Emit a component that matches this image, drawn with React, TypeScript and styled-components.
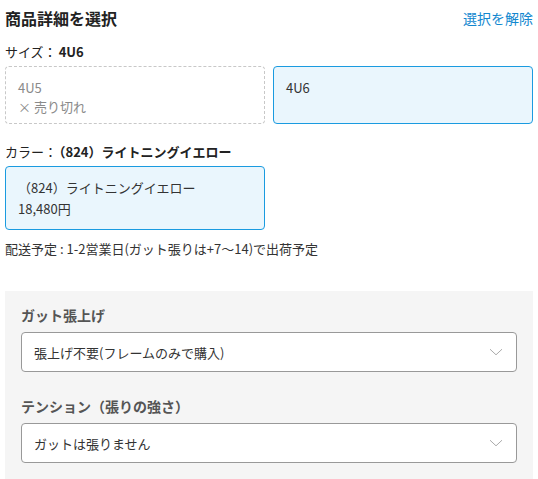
import React from "react";
import styled, { createGlobalStyle } from "styled-components";

const GlobalStyle = createGlobalStyle`
    body {
        margin: 0;
        background: #fff;
        font-family: "Noto Sans CJK JP", "Noto Sans", sans-serif;
        color: #333;
    }
`;

const Page = styled.div`
    padding: 6px 5px 0;
    height: 479px;
    overflow: hidden;
    box-sizing: border-box;
`;

const Header = styled.div`
    display: flex;
    justify-content: space-between;
    align-items: center;
    height: 24px;
`;

const Title = styled.h2`
    margin: 0;
    font-size: 16px;
    font-weight: 700;
    line-height: 24px;
    color: #222;
`;

const ClearLink = styled.a`
    font-size: 14px;
    color: #1287cf;
    text-decoration: none;
    line-height: 24px;
`;

const Label = styled.div<{ $top: number }>`
    margin-top: ${(p) => p.$top}px;
    font-size: 13px;
    line-height: 20px;
    color: #222;
    b {
        font-weight: 700;
        margin-left: 2px;
    }
`;

const CardGrid = styled.div`
    display: grid;
    grid-template-columns: 1fr 1fr;
    gap: 8px;
    margin-top: 4px;
`;

const Card = styled.div<{ $selected?: boolean; $soldOut?: boolean }>`
    box-sizing: border-box;
    min-height: 58px;
    padding: 11px 12px 7px;
    font-size: 13px;
    line-height: 19px;
    border-radius: 4px;
    border: 1px ${(p) => (p.$soldOut ? "dashed #c8c8c8" : p.$selected ? "solid #1a9be0" : "solid #ccc")};
    background: ${(p) => (p.$selected ? "#eaf6fd" : "#fff")};
    color: ${(p) => (p.$soldOut ? "#8a8a8a" : "#333")};
`;

const ColorCard = styled(Card)`
    min-height: 63px;
    padding: 10px 12px;
    line-height: 21px;
`;

const Delivery = styled.div`
    margin-top: 9px;
    font-size: 13px;
    line-height: 20px;
    color: #333;
`;

const OptionPanel = styled.div`
    margin-top: 32px;
    background: #f5f5f5;
    padding: 14px 16px 20px;
`;

const FieldLabel = styled.div<{ $top?: number }>`
    margin-top: ${(p) => p.$top ?? 0}px;
    font-size: 14px;
    font-weight: 700;
    line-height: 20px;
    color: #555;
`;

const SelectBox = styled.div`
    margin-top: 7px;
    height: 40px;
    box-sizing: border-box;
    display: flex;
    align-items: center;
    justify-content: space-between;
    padding: 0 13px 0 12px;
    background: #fff;
    border: 1px solid #999;
    border-radius: 4px;
    font-size: 13px;
    color: #333;
`;

const Chevron = () => (
    <svg width="14" height="8" viewBox="0 0 14 8" fill="none">
        <path d="M1 1.2 L7 6.8 L13 1.2" stroke="#ababab" strokeWidth="1" />
    </svg>
);

const App: React.FC = () => {
    return (
        <Page>
            <GlobalStyle />
            <Header>
                <Title>商品詳細を選択</Title>
                <ClearLink href="#">選択を解除</ClearLink>
            </Header>

            <Label $top={12}>
                サイズ：<b>4U6</b>
            </Label>
            <CardGrid>
                <Card $soldOut>
                    4U5
                    <br />
                    × 売り切れ
                </Card>
                <Card $selected>4U6</Card>
            </CardGrid>

            <Label $top={18}>
                カラー：<b>（824）ライトニングイエロー</b>
            </Label>
            <CardGrid>
                <ColorCard $selected>
                    （824）ライトニングイエロー
                    <br />
                    18,480円
                </ColorCard>
            </CardGrid>

            <Delivery>配送予定 : 1-2営業日(ガット張りは+7〜14)で出荷予定</Delivery>

            <OptionPanel>
                <FieldLabel>ガット張上げ</FieldLabel>
                <SelectBox>
                    <span>張上げ不要(フレームのみで購入)</span>
                    <Chevron />
                </SelectBox>
                <FieldLabel $top={24}>テンション（張りの強さ）</FieldLabel>
                <SelectBox>
                    <span>ガットは張りません</span>
                    <Chevron />
                </SelectBox>
            </OptionPanel>
        </Page>
    );
};

export default App;
